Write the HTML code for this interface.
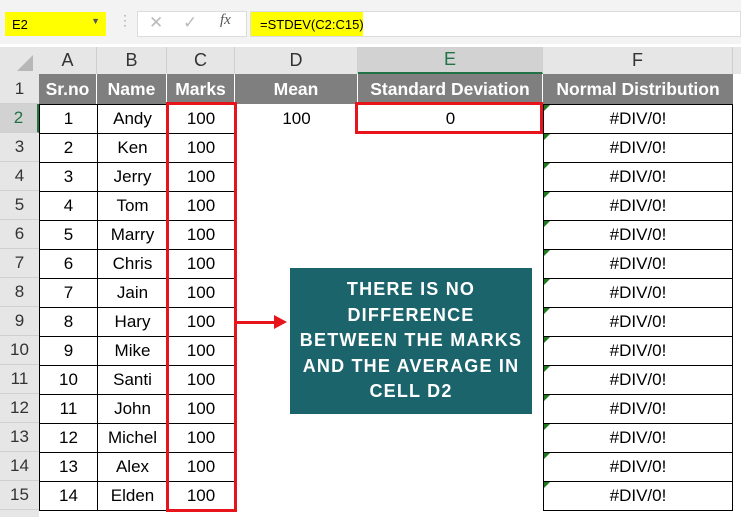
<!DOCTYPE html>
<html><head><style>
body{margin:0;width:741px;height:517px;overflow:hidden;background:#fff;font-family:"Liberation Sans",sans-serif;position:relative}
.a{position:absolute;box-sizing:border-box}
.c{position:absolute;box-sizing:border-box;display:flex;align-items:center;justify-content:center;font-size:17px;color:#000}
.h{background:#7f7f7f;color:#fff;font-weight:bold;font-size:17.5px}
.rh{position:absolute;left:0;width:39px;background:#e6e6e6;color:#333;font-size:17px;display:flex;align-items:center;justify-content:center;border-bottom:1px solid #d0d0d0;box-sizing:border-box}
.ch{position:absolute;top:47px;height:27px;background:#e6e6e6;color:#333;font-size:18px;display:flex;align-items:center;justify-content:center;border-right:1px solid #cfcfcf;box-sizing:border-box}
.tri{position:absolute;width:0;height:0;border-top:6px solid #1e7b1e;border-right:6px solid transparent}
</style></head><body>
<div class="a" style="left:0;top:0;width:741px;height:44px;background:#f3f3f3"></div>
<div class="a" style="left:5px;top:12px;width:101px;height:24px;background:#ffff00;font-size:13px;padding:5px 0 0 7px">E2<span style="position:absolute;right:6px;top:4px;font-size:9px;color:#555">▼</span></div>
<div class="a" style="left:118px;top:12px;color:#aaa;font-size:14px">⋮</div>
<div class="a" style="left:137px;top:11px;width:110px;height:26px;background:#fff;border:1px solid #ddd"></div>
<div class="a" style="left:149px;top:13px;color:#bbb;font-size:17px">✕</div>
<div class="a" style="left:183px;top:13px;color:#bbb;font-size:17px">✓</div>
<div class="a" style="left:220px;top:12px;color:#555;font-size:15px;font-style:italic;font-family:'Liberation Serif',serif">fx</div>
<div class="a" style="left:250px;top:11px;width:491px;height:26px;background:#fff;border:1px solid #ddd"></div>
<div class="a" style="left:251px;top:12px;width:112px;height:24px;background:#ffff00;font-size:13px;padding:5px 0 0 9px;white-space:nowrap">=STDEV(C2:C15)</div>
<div class="a" style="left:0;top:44px;width:741px;height:3px;background:#fff"></div>
<div class="a" style="left:0;top:47px;width:741px;height:27px;background:#e6e6e6"></div>
<div class="a" style="left:17px;top:55px;width:0;height:0;border-bottom:16px solid #b7b7b7;border-left:16px solid transparent"></div>
<div class="ch" style="left:39px;width:58px">A</div>
<div class="ch" style="left:97px;width:70px">B</div>
<div class="ch" style="left:167px;width:68px">C</div>
<div class="ch" style="left:235px;width:123px">D</div>
<div class="ch" style="left:358px;width:185px;background:#d2d2d2;color:#217346;border-bottom:2px solid #217346">E</div>
<div class="ch" style="left:543px;width:190px">F</div>
<div class="a" style="left:0;top:74px;width:39px;height:443px;background:#e6e6e6"></div>
<div class="rh" style="top:74px;height:30px">1</div>
<div class="rh" style="top:104px;height:29px;background:#d2d2d2;color:#217346;border-right:2px solid #217346">2</div>
<div class="rh" style="top:133px;height:29px">3</div><div class="rh" style="top:162px;height:29px">4</div><div class="rh" style="top:191px;height:29px">5</div><div class="rh" style="top:220px;height:29px">6</div><div class="rh" style="top:249px;height:29px">7</div><div class="rh" style="top:278px;height:29px">8</div><div class="rh" style="top:307px;height:29px">9</div><div class="rh" style="top:336px;height:29px">10</div><div class="rh" style="top:365px;height:29px">11</div><div class="rh" style="top:394px;height:29px">12</div><div class="rh" style="top:423px;height:29px">13</div><div class="rh" style="top:452px;height:29px">14</div><div class="rh" style="top:481px;height:29px">15</div>
<div class="c h" style="left:39px;top:74px;width:58px;height:30px;border-right:1px solid #fff">Sr.no</div>
<div class="c h" style="left:97px;top:74px;width:70px;height:30px;border-right:1px solid #fff">Name</div>
<div class="c h" style="left:167px;top:74px;width:68px;height:30px;border-right:1px solid #fff">Marks</div>
<div class="c h" style="left:235px;top:74px;width:123px;height:30px;border-right:1px solid #fff">Mean</div>
<div class="c h" style="left:358px;top:74px;width:185px;height:30px;border-right:1px solid #fff">Standard Deviation</div>
<div class="c h" style="left:543px;top:74px;width:190px;height:30px">Normal Distribution</div>
<div id="rows"></div>
<div class="c" style="left:235px;top:104px;width:123px;height:29px">100</div>
<div class="c" style="left:358px;top:104px;width:185px;height:29px">0</div>
<script>
var names=["Andy","Ken","Jerry","Tom","Marry","Chris","Jain","Hary","Mike","Santi","John","Michel","Alex","Elden"];
var h="";
for(var i=0;i<14;i++){var t=104+i*29;
h+='<div class="c" style="left:39px;top:'+t+'px;width:59px;height:30px;border:1px solid #000;border-top:'+(i?0:1)+'px solid #000">'+(i+1)+'</div>';
h+='<div class="c" style="left:97px;top:'+t+'px;width:71px;height:30px;border:1px solid #000;border-top:'+(i?0:1)+'px solid #000">'+names[i]+'</div>';
h+='<div class="c" style="left:167px;top:'+t+'px;width:68px;height:30px;border-bottom:1px solid #000">100</div>';
h+='<div class="c" style="left:543px;top:'+t+'px;width:190px;height:30px;border:1px solid #000;border-top:'+(i?0:1)+'px solid #000">#DIV/0!</div>';
h+='<div class="tri" style="left:544px;top:'+(t+1)+'px"></div>';}
document.getElementById("rows").innerHTML=h;
</script>
<div class="a" style="left:166px;top:102px;width:71px;height:410px;border:3px solid #e8141c"></div>
<div class="a" style="left:355px;top:102px;width:188px;height:32px;border:3px solid #e8141c"></div>
<div class="a" style="left:237px;top:321px;width:38px;height:3px;background:#e8141c"></div>
<div class="a" style="left:274px;top:315px;width:0;height:0;border-left:13px solid #e8141c;border-top:7px solid transparent;border-bottom:7px solid transparent"></div>
<div class="a" style="left:290px;top:268px;width:242px;height:146px;background:#1b646c;color:#fff;font-weight:bold;font-size:18px;letter-spacing:1.2px;line-height:25.5px;text-align:center;padding-top:9px;white-space:nowrap">THERE IS NO<br>DIFFERENCE<br>BETWEEN THE MARKS<br>AND THE AVERAGE IN<br>CELL D2</div>
</body></html>
